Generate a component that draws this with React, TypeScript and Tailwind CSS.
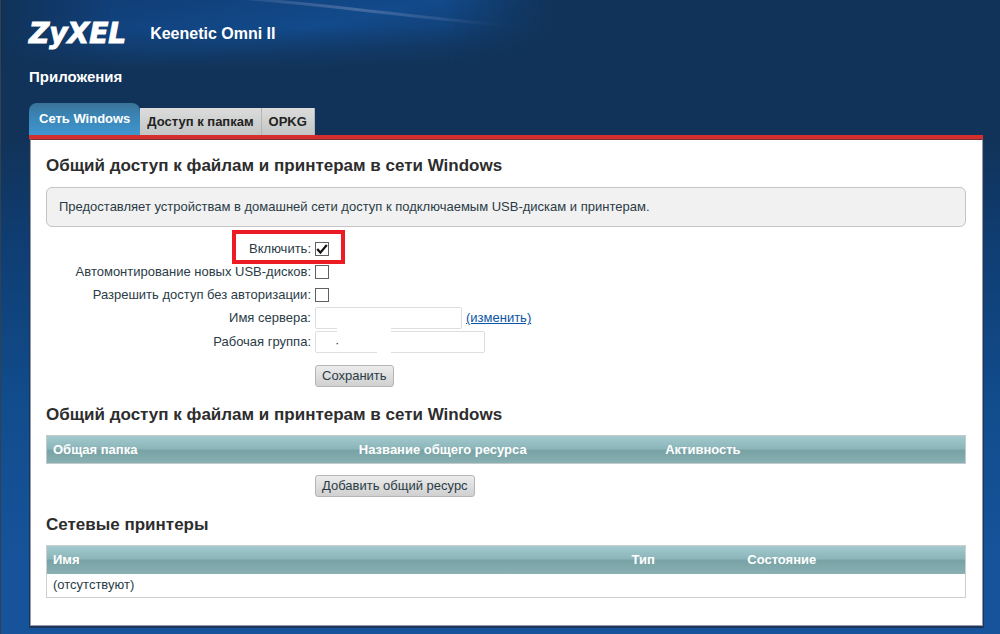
import type { ReactNode } from 'react';

const TABS = [
  { id: 'windows', label: 'Сеть Windows' },
  { id: 'folders', label: 'Доступ к папкам' },
  { id: 'opkg', label: 'OPKG' },
];

const ACTIVE_TAB = 'windows';

const HEAD_CELL = 'h-7 px-1.5 text-left font-bold text-white';

const HEAD_ROW =
  'bg-[linear-gradient(#a3cbcf,#8cb5b9_45%,#78a2a5_52%,#8ab1b4)]';

function SectionTitle({ children }: { children: ReactNode }) {
  return <h2 className="text-[17px] leading-5 font-bold text-[#2d2d2d]">{children}</h2>;
}

function ActionButton({ children }: { children: ReactNode }) {
  return (
    <button
      type="button"
      className="h-[22px] rounded-[3px] border border-[#b5b5b5] bg-linear-to-b from-[#ececec] to-[#d0d0d0] px-1.5 whitespace-nowrap text-[#2b3c46]"
    >
      {children}
    </button>
  );
}

interface CheckRowProps {
  id: string;
  label: string;
  checked?: boolean;
  highlighted?: boolean;
}

function CheckRow({ id, label, checked, highlighted }: CheckRowProps) {
  return (
    <div className="grid h-[23px] grid-cols-[265px_1fr] items-center gap-1">
      <label htmlFor={id} className="text-right">{label}</label>
      <span className="relative flex items-center">
        <input
          id={id}
          type="checkbox"
          defaultChecked={checked}
          className="peer size-3.5 appearance-none border border-[#606060] bg-white"
        />
        <svg
          viewBox="0 0 14 14"
          className="pointer-events-none absolute left-0 hidden size-3.5 peer-checked:block"
          fill="none"
          stroke="#111"
          strokeWidth="2.2"
        >
          <path d="M2.2 7 5.4 10.6 11.8 3" />
        </svg>
        {highlighted && (
          <span className="pointer-events-none absolute -top-3 -left-[83px] h-[34px] w-[113px] border-4 border-[#ed1c24]" />
        )}
      </span>
    </div>
  );
}

export default function App() {
  return (
    <div className="relative min-h-screen border-l border-[#33404d] bg-[linear-gradient(#113359_140px,#0f3d72_240px,#114c8c_400px,#16539a_560px)] pr-[17px] pb-[9px] pl-7 font-['Liberation_Sans',Arial,sans-serif] text-[13px] leading-5 text-[#2b3c46]">
      {/* header glow */}
      <div className="pointer-events-none absolute top-0 left-0 h-[68px] w-[555px] overflow-hidden bg-[linear-gradient(168deg,#113f78_15%,#124a8b_50%,#113359_95%)] [mask-image:linear-gradient(to_right,transparent,#000_20%,#000_80%,transparent)]">
        <div className="absolute inset-0 bg-linear-to-b from-transparent from-40% to-[#113359]" />
        <svg className="absolute top-0 left-0" width="555" height="68" fill="none">
          <defs>
            <linearGradient id="streak" gradientUnits="userSpaceOnUse" x1="225" y1="0" x2="510" y2="0">
              <stop offset="0" stopColor="#6d86b4" stopOpacity="0.15" />
              <stop offset="0.45" stopColor="#6d86b4" stopOpacity="0.55" />
              <stop offset="1" stopColor="#6d86b4" stopOpacity="0" />
            </linearGradient>
          </defs>
          <path d="M225 -3 Q300 3 360 10 T510 26" stroke="url(#streak)" strokeWidth="3" />
        </svg>
      </div>

      <header className="relative">
        <div className="flex h-[67px] items-center gap-6 text-white">
          <span className="font-['DejaVu_Sans',sans-serif] text-[28px] font-bold italic [-webkit-text-stroke:1px_white]">ZyXEL</span>
          <span className="text-[16px] font-bold">Keenetic Omni II</span>
        </div>
        <h1 className="text-[15px] font-bold text-white">Приложения</h1>
        <nav className="mt-4 flex items-end font-bold">
          {TABS.map(({ id, label }) =>
            id === ACTIVE_TAB ? (
              <a
                key={id}
                href="#"
                className="flex h-8 items-center rounded-t-lg bg-[linear-gradient(#3b7399,#3a86b8_45%,#4096cf)] px-2.5 text-white"
              >
                {label}
              </a>
            ) : (
              <a
                key={id}
                href="#"
                className="flex h-[27px] items-center border-r border-[#b5b5b5] bg-linear-to-b from-[#dcdcdc] to-[#c3c5c5] px-[7px] text-[#222]"
              >
                {label}
              </a>
            ),
          )}
        </nav>
      </header>

      <main className="relative border-t-4 border-[#d42f2d]">
        <div className="ml-px border border-[#9499ac] border-t-[#7d2f35] bg-white pt-4 pr-4 pb-[27px] pl-[15px] shadow-[0_1px_0_1px_#1d3557]">
          <SectionTitle>Общий доступ к файлам и принтерам в сети Windows</SectionTitle>
          <p className="mt-[11px] rounded-md border border-[#c4c4c4] bg-[#f1f1f1] px-3 py-[9px]">
            Предоставляет устройствам в домашней сети доступ к подключаемым USB-дискам и принтерам.
          </p>

          <form className="mt-2.5">
            <CheckRow id="enable" label="Включить:" checked highlighted />
            <CheckRow id="automount" label="Автомонтирование новых USB-дисков:" />
            <CheckRow id="anonymous" label="Разрешить доступ без авторизации:" />
            <div className="grid h-6 grid-cols-[265px_1fr] items-center gap-1">
              <label htmlFor="server" className="text-right">Имя сервера:</label>
              <span className="flex items-center gap-1">
                <input id="server" type="text" className="h-[22px] w-[147px] rounded-xs border border-[#dedede] bg-white px-1" />
                <a href="#" className="text-[#0b55a5] underline">(изменить)</a>
              </span>
            </div>
            <div className="grid h-6 grid-cols-[265px_1fr] items-center gap-1">
              <label htmlFor="workgroup" className="text-right">Рабочая группа:</label>
              <span className="relative flex items-center">
                <input
                  id="workgroup"
                  type="text"
                  defaultValue="·"
                  className="h-[22px] w-[170px] rounded-xs border border-[#dedede] bg-white pl-[19px]"
                />
                <span className="pointer-events-none absolute -top-1 left-[22px] h-2 w-[54px] bg-white" />
                <span className="pointer-events-none absolute -bottom-1 left-[62px] h-2 w-[14px] bg-white" />
              </span>
            </div>
            <div className="mt-[11px] pl-[269px]">
              <ActionButton>Сохранить</ActionButton>
            </div>
          </form>

          <div className="mt-[18px]">
            <SectionTitle>Общий доступ к файлам и принтерам в сети Windows</SectionTitle>
          </div>
          <table className="mt-2.5 w-full table-fixed border border-[#c4c9c9]">
            <thead>
              <tr className={HEAD_ROW}>
                <th className={HEAD_CELL}>Общая папка</th>
                <th className={HEAD_CELL}>Название общего ресурса</th>
                <th className={HEAD_CELL}>Активность</th>
              </tr>
            </thead>
          </table>
          <div className="mt-[11px] pl-[269px]">
            <ActionButton>Добавить общий ресурс</ActionButton>
          </div>

          <div className="mt-[18px]">
            <SectionTitle>Сетевые принтеры</SectionTitle>
          </div>
          <table className="mt-2.5 w-full table-fixed border border-[#cfcfcf]">
            <thead>
              <tr className={HEAD_ROW}>
                <th className={`${HEAD_CELL} w-[63%]`}>Имя</th>
                <th className={`${HEAD_CELL} w-[12.6%]`}>Тип</th>
                <th className={HEAD_CELL}>Состояние</th>
              </tr>
            </thead>
            <tbody>
              <tr>
                <td colSpan={3} className="h-6 px-1.5">(отсутствуют)</td>
              </tr>
            </tbody>
          </table>
        </div>
      </main>
    </div>
  );
}
